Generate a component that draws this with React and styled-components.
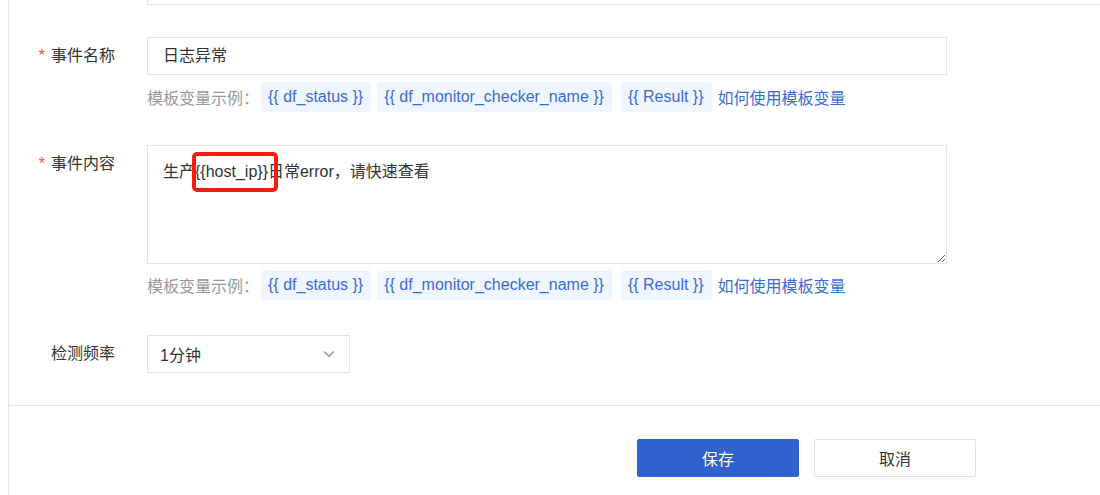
import React from "react";
import styled, { createGlobalStyle } from "styled-components";

const Global = createGlobalStyle`
  html, body { margin: 0; padding: 0; background: #fff; }
  body { font-family: "Liberation Sans", "Noto Sans CJK SC", sans-serif; font-size: 16px; color: #333; }
  * { box-sizing: border-box; }
`;

const Page = styled.div`
  width: 1100px;
  height: 495px;
  overflow: hidden;
  padding-left: 8px;
`;

const Panel = styled.div`
  height: 100%;
  border-left: 1px solid #e4e4e4;
  display: flex;
  flex-direction: column;
`;

const PrevField = styled.div`
  margin-left: 138px;
  width: 1000px;
  height: 5px;
  border-left: 1px solid #e2e2e2;
  border-bottom: 1px solid #e2e2e2;
  flex-shrink: 0;
`;

const Form = styled.div`
  display: flex;
  flex-direction: column;
  padding-top: 32px;
`;

const Row = styled.div`
  display: flex;
  align-items: flex-start;
  margin-top: ${(p) => p.$mt || 0}px;
`;

const Label = styled.div`
  width: 138px;
  padding-right: 32px;
  text-align: right;
  line-height: 38px;
  height: 38px;
  color: #333;
  white-space: nowrap;
  flex-shrink: 0;
`;

const Star = styled.span`
  color: #f5522d;
  margin-right: 6px;
`;

const Control = styled.div`
  display: flex;
  flex-direction: column;
`;

const Input = styled.div`
  width: 800px;
  height: 38px;
  border: 1px solid #e3e3e3;
  padding: 0 15px;
  line-height: 36px;
  color: #333;
`;

const AreaWrap = styled.div`
  position: relative;
  width: 800px;
  height: 119px;
`;

const TextArea = styled.textarea`
  width: 800px;
  height: 119px;
  border: 1px solid #e3e3e3;
  padding: 14px 15px;
  font: inherit;
  line-height: 24px;
  color: #333;
  outline: none;
  resize: vertical;
  display: block;
`;

const Highlight = styled.div`
  position: absolute;
  left: 45px;
  top: 7px;
  width: 86px;
  height: 40px;
  border: 4px solid #f21d0e;
  border-radius: 5px;
  pointer-events: none;
`;

const Hint = styled.div`
  display: flex;
  align-items: center;
  margin-top: ${(p) => p.$mt ?? 8}px;
  height: 30px;
`;

const HintLabel = styled.span`
  color: #999;
  margin-right: 2px;
  white-space: nowrap;
`;

const Tag = styled.span`
  background: #eff6ff;
  color: #3b6cd4;
  height: 30px;
  line-height: 30px;
  padding: 0 8px 0 7px;
  border-radius: 3px;
  margin-right: ${(p) => p.$gap ?? 6}px;
  white-space: nowrap;
`;

const Link = styled.a`
  color: #3b6cd4;
  text-decoration: none;
  white-space: nowrap;
`;

const Select = styled.div`
  width: 203px;
  height: 38px;
  border: 1px solid #e3e3e3;
  padding: 0 14px 0 12px;
  display: flex;
  align-items: center;
  justify-content: space-between;
  color: #333;
`;

const Divider = styled.div`
  height: 1px;
  background: #e6e6e6;
  margin-top: 32px;
`;

const Footer = styled.div`
  display: flex;
  gap: 15px;
  padding-left: 628px;
  padding-top: 33px;
`;

const Button = styled.button`
  width: 162px;
  height: 38px;
  border-radius: 2px;
  font: inherit;
  font-size: 16px;
  cursor: pointer;
  border: 1px solid ${(p) => (p.$primary ? "#2f62cc" : "#dcdfe6")};
  background: ${(p) => (p.$primary ? "#2f62cc" : "#fff")};
  color: ${(p) => (p.$primary ? "#fff" : "#333")};
`;

const Chevron = () => (
  <svg width="12" height="8" viewBox="0 0 12 8" fill="none">
    <path d="M1 1.5L6 6.2L11 1.5" stroke="#8a8f99" strokeWidth="1.4" />
  </svg>
);

const TemplateHint = ({ mt }) => (
  <Hint $mt={mt}>
    <HintLabel>模板变量示例：</HintLabel>
    <Tag>{"{{ df_status }}"}</Tag>
    <Tag $gap={9}>{"{{ df_monitor_checker_name }}"}</Tag>
    <Tag>{"{{ Result }}"}</Tag>
    <Link href="#">如何使用模板变量</Link>
  </Hint>
);

export default function App() {
  return (
    <Page>
      <Global />
      <Panel>
        <PrevField />
        <Form>
          <Row>
            <Label>
              <Star>*</Star>事件名称
            </Label>
            <Control>
              <Input>日志异常</Input>
              <TemplateHint mt={7} />
            </Control>
          </Row>
          <Row $mt={33}>
            <Label>
              <Star>*</Star>事件内容
            </Label>
            <Control>
              <AreaWrap>
                <TextArea defaultValue={"生产{{host_ip}}日常error，请快速查看"} />
                <Highlight />
              </AreaWrap>
              <TemplateHint mt={6} />
            </Control>
          </Row>
          <Row $mt={35}>
            <Label>检测频率</Label>
            <Select>
              <span>1分钟</span>
              <Chevron />
            </Select>
          </Row>
        </Form>
        <Divider />
        <Footer>
          <Button $primary>保存</Button>
          <Button>取消</Button>
        </Footer>
      </Panel>
    </Page>
  );
}
